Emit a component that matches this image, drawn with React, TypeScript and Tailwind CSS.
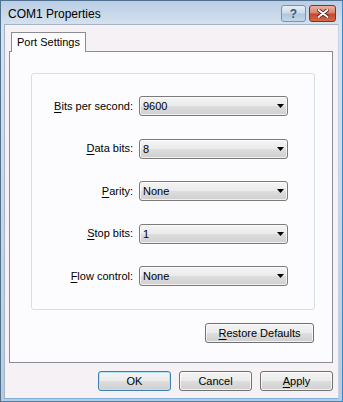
import React from "react";

const font = { fontFamily: '"Liberation Sans", Arial, sans-serif' };

function U({ c, rest }: { c: string; rest: string }) {
  return (
    <>
      <span className="underline underline-offset-2">{c}</span>
      {rest}
    </>
  );
}

function Arrow() {
  return (
    <svg width="7" height="4" viewBox="0 0 7 4" className="block">
      <polygon points="0,0 7,0 3.5,4" fill="#000" />
    </svg>
  );
}

function Combo({ value }: { value: string }) {
  return (
    <div className="flex h-[20px] w-[149px] items-center rounded-[3px] border border-[#7a7a7a] bg-[linear-gradient(to_bottom,#f4f4f4_0%,#ebebeb_48%,#dddddd_52%,#cfcfcf_100%)] pl-[3px] pr-[3px] shadow-[inset_0_0_0_1px_rgba(255,255,255,0.7)]">
      <span className="flex-1 pt-px text-[11px] leading-none text-black">{value}</span>
      <Arrow />
    </div>
  );
}

function Btn({
  children,
  w,
  primary = false,
}: {
  children: React.ReactNode;
  w: string;
  primary?: boolean;
}) {
  return (
    <button
      type="button"
      className={`flex h-[20px] ${w} items-center justify-center rounded-[3px] border text-[11px] leading-none text-black bg-[linear-gradient(to_bottom,#f4f4f4_0%,#ebebeb_48%,#dddddd_52%,#cfcfcf_100%)] ${
        primary
          ? "border-[#3c7fb1] shadow-[inset_0_0_0_1px_#b4e4f8]"
          : "border-[#707070] shadow-[inset_0_0_0_1px_rgba(255,255,255,0.75)]"
      }`}
    >
      {children}
    </button>
  );
}

const rows: { label: React.ReactNode; value: string }[] = [
  { label: <U c="B" rest="its per second:" />, value: "9600" },
  { label: <U c="D" rest="ata bits:" />, value: "8" },
  { label: <U c="P" rest="arity:" />, value: "None" },
  { label: <U c="S" rest="top bits:" />, value: "1" },
  { label: <U c="F" rest="low control:" />, value: "None" },
];

export default function App() {
  return (
    <div
      style={font}
      className="flex h-[402px] w-[343px] flex-col overflow-hidden border border-[#52708f] border-r-[#2f8ad6] border-b-[#2f8ad6] bg-[linear-gradient(to_bottom,#b9cde4_0px,#d6e2ee_24px,#c9d8e8_200px,#b7cbe0_100%)]"
    >
      {/* Title bar */}
      <div className="flex h-[23px] items-center pl-[7px] pr-[6px]">
        <span className="flex-1 pt-[2px] text-[12px] text-black">COM1 Properties</span>
        <div className="flex gap-[3px] self-start pt-[4px]">
          <div className="flex h-[17px] w-[25px] items-center justify-center rounded-[3px] border border-[#7893ae] bg-[linear-gradient(to_bottom,#e6eef6_0%,#cbdaea_48%,#b0c6dd_52%,#c3d7ea_100%)] text-[12px] font-bold leading-none text-[#3b5673]">
            ?
          </div>
          <div className="flex h-[17px] w-[27px] items-center justify-center rounded-[3px] border border-[#8a2d1f] bg-[linear-gradient(to_bottom,#eab1a2_0%,#d9806b_48%,#c5452c_52%,#d46a4b_100%)]">
            <svg width="12" height="9" viewBox="0 0 12 9">
              <path d="M1.5 1 L10.5 8 M10.5 1 L1.5 8" stroke="#5a1a10" strokeWidth="3.6" strokeLinecap="round" />
              <path d="M1.5 1 L10.5 8 M10.5 1 L1.5 8" stroke="#fff" strokeWidth="2" strokeLinecap="round" />
            </svg>
          </div>
        </div>
      </div>

      {/* Client area */}
      <div className="flex flex-1 flex-col pl-[3px] pr-[3px] pb-[2px]">
        <div className="flex flex-1 flex-col border border-[#a3b4c7] border-r-[#c4d3e3] border-b-[#7fb0dc] bg-[#f5f1f5] pl-[4px] pr-[5px] pt-[7px]">
          {/* Tab */}
          <div className="relative z-10 ml-[2px] flex h-[20px] w-[75px] items-start justify-center border border-b-0 border-[#898c95] bg-[#fcfcfe] pt-[4px] text-[11px] leading-none text-black">
            Port Settings
          </div>
          {/* Panel */}
          <div className="-mt-px flex h-[312px] flex-col border border-[#898c95] bg-[#fcfcfe] pl-[21px] pr-[17px] pt-[21px]">
            <div className="flex h-[237px] flex-col gap-[22.5px] rounded-[3px] border border-[#d5dfe5] pt-[22px]">
              {rows.map((r, i) => (
                <div key={i} className="flex h-[20px] items-center">
                  <div className="w-[101px] text-right text-[11px] leading-none text-black">{r.label}</div>
                  <div className="ml-[6px]">
                    <Combo value={r.value} />
                  </div>
                </div>
              ))}
            </div>
            <div className="mt-[13px] flex justify-end pr-px">
              <Btn w="w-[109px]">
                <U c="R" rest="estore Defaults" />
              </Btn>
            </div>
          </div>
          {/* Dialog buttons */}
          <div className="mt-[8px] flex justify-end gap-[8px]">
            <Btn w="w-[73px]" primary>
              OK
            </Btn>
            <Btn w="w-[73px]">Cancel</Btn>
            <Btn w="w-[73px]">
              <U c="A" rest="pply" />
            </Btn>
          </div>
        </div>
      </div>
    </div>
  );
}
